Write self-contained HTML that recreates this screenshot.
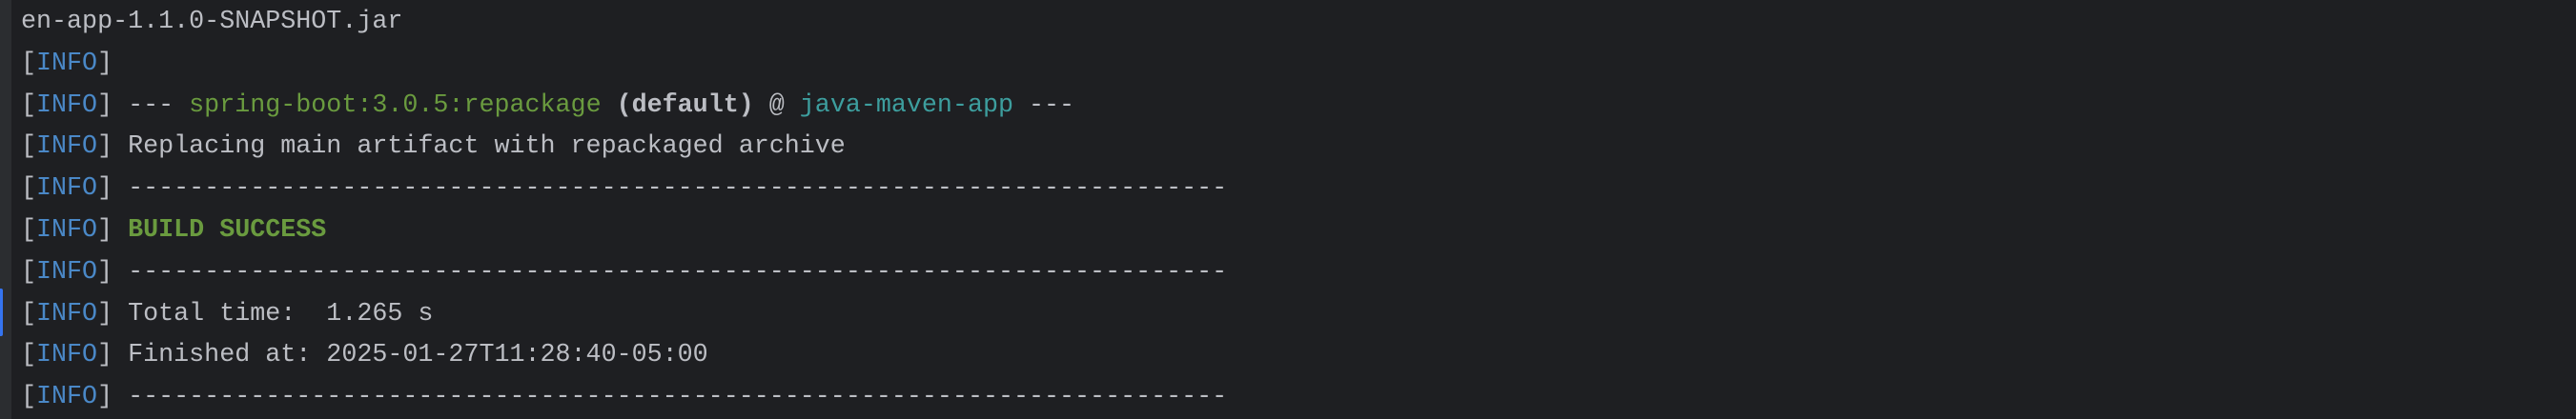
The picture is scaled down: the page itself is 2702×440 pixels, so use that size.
<!DOCTYPE html>
<html><head><meta charset="utf-8"><style>
html,body{margin:0;padding:0;}
body{width:2702px;height:440px;background:#1e1f22;overflow:hidden;position:relative;}
.g{position:absolute;left:0;top:0;width:12px;height:440px;background:#2b2d30;}
.bar{position:absolute;left:0;top:303px;width:3px;height:50px;background:#3574f0;border-radius:0 2px 2px 0;}
pre{position:absolute;left:22px;top:2px;margin:0;font-family:"Liberation Mono",monospace;font-size:26.7px;line-height:43.8px;color:#bcbec4;white-space:pre;}
.i{color:#4a88c7}.s{color:#6a9b3f}.b{font-weight:bold}.t{color:#3d9e9e}.bs{color:#6a9b3f;font-weight:bold}
</style></head><body>
<div class="g"></div><div class="bar"></div>
<pre>en-app-1.1.0-SNAPSHOT.jar
[<span class="i">INFO</span>]
[<span class="i">INFO</span>] --- <span class="s">spring-boot:3.0.5:repackage</span> <span class="b">(default)</span> @ <span class="t">java-maven-app</span> ---
[<span class="i">INFO</span>] Replacing main artifact with repackaged archive
[<span class="i">INFO</span>] ------------------------------------------------------------------------
[<span class="i">INFO</span>] <span class="bs">BUILD SUCCESS</span>
[<span class="i">INFO</span>] ------------------------------------------------------------------------
[<span class="i">INFO</span>] Total time:  1.265 s
[<span class="i">INFO</span>] Finished at: 2025-01-27T11:28:40-05:00
[<span class="i">INFO</span>] ------------------------------------------------------------------------</pre>
</body></html>
